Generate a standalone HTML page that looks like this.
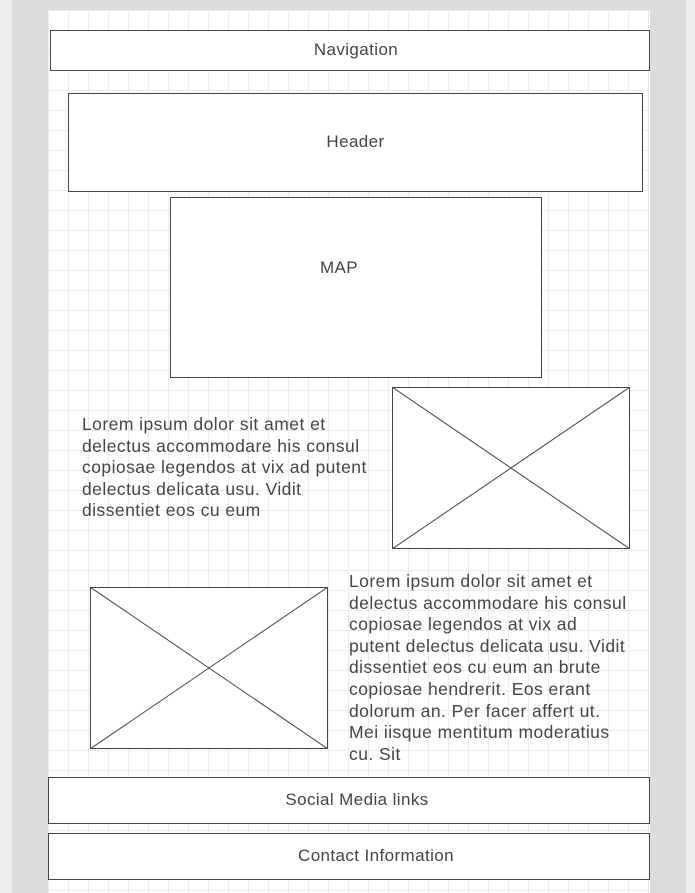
<!DOCTYPE html>
<html><head><style>
*{margin:0;padding:0;box-sizing:border-box}
body{width:695px;height:893px;background:#eee;position:relative;overflow:hidden;font-family:"Liberation Sans",sans-serif;color:#444}
.side{position:absolute;left:12px;top:0;width:674px;height:893px;background:#dcdcdc}
.page{position:absolute;left:48px;top:10px;width:602px;height:883px;background-color:#fff;
background-image:linear-gradient(to right,#ebebeb 1px,transparent 1px),linear-gradient(to bottom,#ebebeb 1px,transparent 1px);
background-size:20px 20px;background-position:0px 0px}
.b{position:absolute;border:1px solid #444;background:#fff;display:flex;align-items:center;justify-content:center;font-size:17px;letter-spacing:0.4px;color:#444}
.t{position:absolute;font-size:17.5px;letter-spacing:0.45px;line-height:21.6px;color:#444}
svg{position:absolute}
</style></head><body>
<div class="side"></div>
<div class="page"></div>
<div class="b" style="left:50px;top:30px;width:600px;height:41px;padding-left:12px;padding-bottom:1px">Navigation</div>
<div class="b" style="left:68px;top:93px;width:575px;height:99px;padding-bottom:2px">Header</div>
<div class="b" style="left:170px;top:197px;width:372px;height:181px;align-items:flex-start;padding-top:60px;padding-right:34px">MAP</div>
<svg style="left:392px;top:387px" width="238" height="162"><rect x="0.5" y="0.5" width="237" height="161" fill="#fff" stroke="#444"/><line x1="0" y1="0" x2="238" y2="162" stroke="#444"/><line x1="238" y1="0" x2="0" y2="162" stroke="#444"/></svg>
<svg style="left:90px;top:587px" width="238" height="162"><rect x="0.5" y="0.5" width="237" height="161" fill="#fff" stroke="#444"/><line x1="0" y1="0" x2="238" y2="162" stroke="#444"/><line x1="238" y1="0" x2="0" y2="162" stroke="#444"/></svg>
<div class="t" style="left:82px;top:414px;width:310px">Lorem ipsum dolor sit amet et<br>delectus accommodare his consul<br>copiosae legendos at vix ad putent<br>delectus delicata usu. Vidit<br>dissentiet eos cu eum</div>
<div class="t" style="left:349px;top:571px;width:300px">Lorem ipsum dolor sit amet et<br>delectus accommodare his consul<br>copiosae legendos at vix ad<br>putent delectus delicata usu. Vidit<br>dissentiet eos cu eum an brute<br>copiosae hendrerit. Eos erant<br>dolorum an. Per facer affert ut.<br>Mei iisque mentitum moderatius<br>cu. Sit</div>
<div class="b" style="left:48px;top:777px;width:602px;height:47px;padding-left:16px;padding-bottom:2px">Social Media links</div>
<div class="b" style="left:48px;top:833px;width:602px;height:47px;padding-left:54px;padding-bottom:2px">Contact Information</div>
</body></html>
